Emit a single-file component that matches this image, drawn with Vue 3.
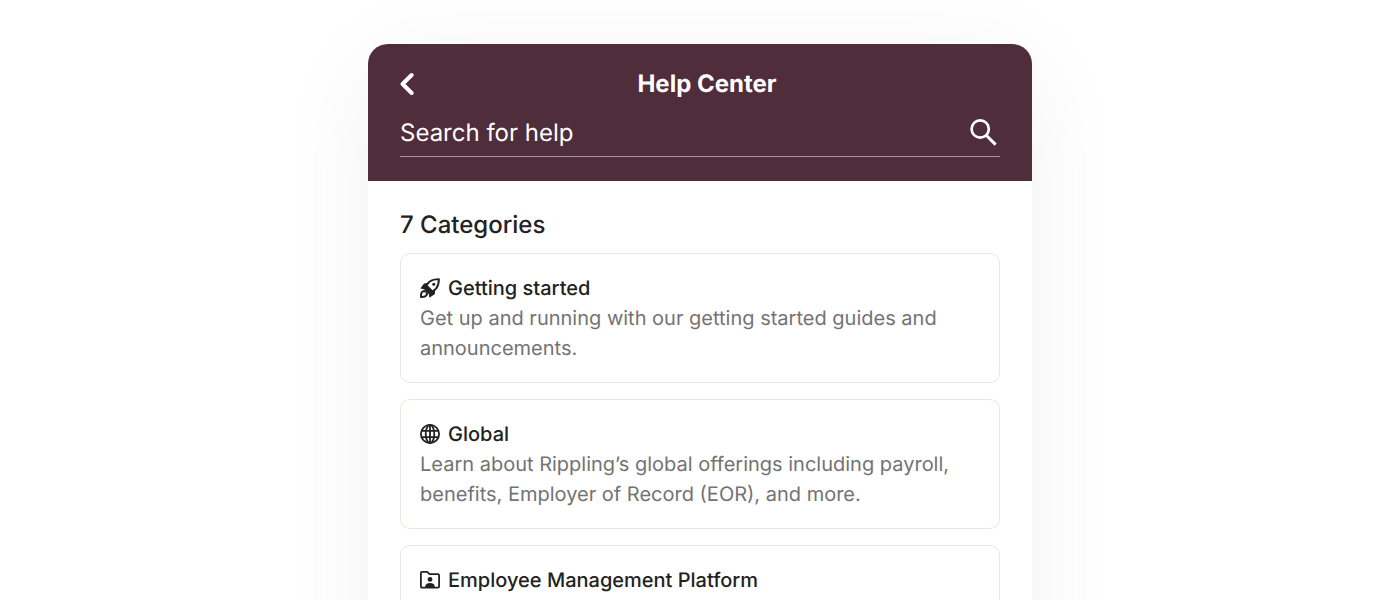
<script setup>
import { ref } from 'vue'

const query = ref('')
const categories = [
  {
    icon: 'rocket',
    title: 'Getting started',
    text: 'Get up and running with our getting started guides and announcements.',
  },
  {
    icon: 'globe',
    title: 'Global',
    text: 'Learn about Rippling’s global offerings including payroll, benefits, Employer of Record (EOR), and more.',
  },
  { icon: 'folder', title: 'Employee Management Platform', text: '' },
]
</script>

<template>
  <div class="page">
    <main class="widget">
      <header class="top">
        <div class="bar">
          <button class="back" type="button" aria-label="Back">
            <svg width="14" height="24" viewBox="0 0 14 24" fill="none" stroke="currentColor" stroke-width="4" stroke-linecap="round" stroke-linejoin="round">
              <path d="M11.6 3 L2.6 12 L11.6 21" />
            </svg>
          </button>
          <h1>Help Center</h1>
        </div>
        <form class="search" role="search" @submit.prevent>
          <input v-model="query" type="text" aria-label="Search for help" placeholder="Search for help" />
          <button type="submit" aria-label="Search">
            <svg width="28" height="28" viewBox="0 0 28 28" fill="none" stroke="currentColor" stroke-width="2.7">
              <circle cx="11.2" cy="10" r="8.6" />
              <path d="M17.2 16.2 L26.6 25.6" stroke-width="3" />
            </svg>
          </button>
        </form>
      </header>

      <section class="content">
        <h2>7 Categories</h2>
        <a v-for="c in categories" :key="c.title" class="card" href="#">
          <span class="name">
            <svg v-if="c.icon === 'rocket'" width="20" height="20" viewBox="0 0 20 20">
              <path d="M8.2 5.2 H5.1 Q4.2 5.2 3.6 6 L0.4 10.6 L5.1 11.4 Z" fill="currentColor" />
              <path d="M15 11.8 V14.9 Q15 15.8 14.2 16.4 L9.4 19.8 L8.6 14.9 Z" fill="currentColor" />
              <path d="M5.3 11.2 C6.4 5 11.2 1.1 18.9 1.1 C18.9 8.6 15 13.4 8.8 14.7 Z" fill="none" stroke="currentColor" stroke-width="1.9" stroke-linejoin="round" />
              <path d="M5.2 11 L7.4 7 L12.8 12.6 L8.8 14.8 Z" fill="currentColor" />
              <circle cx="13.8" cy="6.2" r="1.5" fill="currentColor" />
              <path d="M1 19 C0.8 16 1.3 14.6 2.3 13.9 A2.5 2.5 0 0 1 6.1 17.6 C5.2 18.7 3.5 19.1 1 19 Z" fill="none" stroke="currentColor" stroke-width="2" stroke-linejoin="round" />
            </svg>
            <svg v-else-if="c.icon === 'globe'" width="20" height="20" viewBox="0 0 20 20" fill="none" stroke="currentColor" stroke-width="1.8">
              <circle cx="10" cy="10" r="9.1" />
              <ellipse cx="10" cy="10" rx="4.3" ry="9.1" />
              <path d="M1.7 6.8 H18.3 M1.7 13.2 H18.3 M10 1 V19" />
            </svg>
            <svg v-else width="20" height="20" viewBox="0 0 20 20">
              <path d="M0.9 16.5 V3.1 Q0.9 1.9 2.1 1.9 H7.2 L9.5 4.2 H17.9 Q19.1 4.2 19.1 5.4 V16.5 Q19.1 17.7 17.9 17.7 H2.1 Q0.9 17.7 0.9 16.5 Z" fill="none" stroke="currentColor" stroke-width="1.8" stroke-linejoin="round" />
              <circle cx="10" cy="9.4" r="2.4" fill="currentColor" />
              <path d="M5.3 17.5 V16.2 C5.5 13.8 7.4 12.9 10 12.9 C12.6 12.9 14.5 13.8 14.7 16.2 V17.5 Z" fill="currentColor" />
            </svg>
            {{ c.title }}
          </span>
          <span v-if="c.text" class="text">{{ c.text }}</span>
        </a>
      </section>
    </main>
  </div>
</template>

<style>
body {
  margin: 0;
  background: #fff;
}
</style>

<style scoped>
.page {
  box-sizing: border-box;
  height: 100vh;
  overflow: hidden;
  padding: 44px 20px 0;
  font-family: Inter, "Liberation Sans", sans-serif;
  color: #222;
  text-rendering: geometricPrecision;
}
.widget {
  max-width: 664px;
  min-height: 100vh;
  margin: 0 auto;
  border-radius: 20px;
  background: #fff;
  box-shadow: 0 20px 100px rgba(0, 0, 0, 0.06);
}
.top {
  padding: 24px 32px;
  border-radius: 20px 20px 0 0;
  background: #502d3b;
  color: #fff;
}
.bar {
  display: flex;
  align-items: center;
  height: 32px;
}
button {
  display: flex;
  padding: 0;
  border: 0;
  background: none;
  color: inherit;
  cursor: pointer;
}
h1 {
  flex: 1;
  margin: 0;
  font-size: 24px;
  line-height: 32px;
  font-weight: 700;
  text-align: center;
}
.search {
  display: flex;
  align-items: center;
  justify-content: space-between;
  height: 46px;
  margin-top: 8px;
  padding: 2px 3px 0 0;
  border-bottom: 1px solid #a79699;
}
.search input {
  flex: 1;
  min-width: 0;
  padding: 0;
  border: 0;
  outline: 0;
  background: none;
  color: #fff;
  font: 400 24px/32px Inter, "Liberation Sans", sans-serif;
  text-rendering: inherit;
}
.search input::placeholder {
  color: #fff;
  opacity: 1;
}
.content {
  display: flex;
  flex-direction: column;
  gap: 16px;
  padding: 28px 32px 32px;
}
h2 {
  margin: 0 0 -4px;
  font-size: 24px;
  line-height: 32px;
  font-weight: 500;
}
.card {
  box-sizing: border-box;
  min-height: 130px;
  padding: 19px;
  border: 1px solid #ebe7dd;
  border-radius: 10px;
  color: inherit;
  font-size: 20px;
  line-height: 30px;
  text-decoration: none;
}
.name {
  display: flex;
  align-items: center;
  gap: 8px;
  font-weight: 500;
}
.text {
  display: block;
  color: #737373;
}
</style>
